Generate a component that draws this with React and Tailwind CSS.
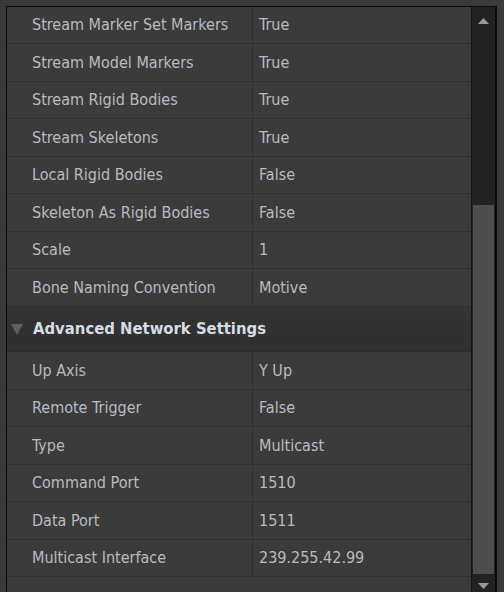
import React from "react";

const top = [
  ["Stream Marker Set Markers", "True"],
  ["Stream Model Markers", "True"],
  ["Stream Rigid Bodies", "True"],
  ["Stream Skeletons", "True"],
  ["Local Rigid Bodies", "False"],
  ["Skeleton As Rigid Bodies", "False"],
  ["Scale", "1"],
  ["Bone Naming Convention", "Motive"],
];
const bottom = [
  ["Up Axis", "Y Up"],
  ["Remote Trigger", "False"],
  ["Type", "Multicast"],
  ["Command Port", "1510"],
  ["Data Port", "1511"],
  ["Multicast Interface", "239.255.42.99"],
];

function Row({ label, value, h }) {
  return (
    <div className={`flex border-b border-[#303030] ${h}`}>
      <div className="w-[246px] shrink-0 flex items-center pl-[25px] border-r border-[#303030] whitespace-nowrap">
        {label}
      </div>
      <div className="flex-1 flex items-center pl-[6px] whitespace-nowrap">{value}</div>
    </div>
  );
}

export default function App() {
  const hs = ["h-[37px]", "h-[38px]"];
  return (
    <div
      className="w-[504px] h-[592px] bg-[#3a3a3a] overflow-hidden pt-[6px] pl-[6px] pr-[7px] text-[16px] text-[#b8bcc0]"
      style={{ fontFamily: '"DejaVu Sans Condensed", "DejaVu Sans", sans-serif' }}
    >
      <div className="flex h-full border-t border-l border-r-2 border-[#0a0a0a]">
        <div className="flex-1 bg-[#3b3b3b] border-r border-[#141414]">
          {top.map(([l, v], i) => (
            <Row key={l} label={l} value={v} h={hs[i % 2]} />
          ))}
          <div className="h-[45px] flex items-center bg-gradient-to-b from-[#343434] to-[#2f2f2f] border-b border-[#2a2a2a] text-[16.5px] font-bold text-[#d4dce4] whitespace-nowrap">
            <svg width="12" height="11" viewBox="0 0 12 11" className="ml-[4px] mr-[10px] shrink-0">
              <polygon points="0,0 12,0 6,11" fill="#606060" />
            </svg>
            Advanced Network Settings
          </div>
          {bottom.map(([l, v], i) => (
            <Row key={l} label={l} value={v} h={hs[(i + 1) % 2]} />
          ))}
          <div className="h-[20px]" />
        </div>
        <div className="w-[23px] shrink-0 bg-[#222222] flex flex-col">
          <div className="h-[198px] flex justify-center pt-[11px]">
            <svg width="11" height="6" viewBox="0 0 11 6">
              <polygon points="5.5,0 11,6 0,6" fill="#9a9a9a" />
            </svg>
          </div>
          <div className="h-[369px] bg-[#4e4e4e] mx-[1px]" />
          <div className="flex-1 flex justify-center pt-[9px]">
            <svg width="11" height="6" viewBox="0 0 11 6">
              <polygon points="0,0 11,0 5.5,6" fill="#9a9a9a" />
            </svg>
          </div>
        </div>
      </div>
    </div>
  );
}
